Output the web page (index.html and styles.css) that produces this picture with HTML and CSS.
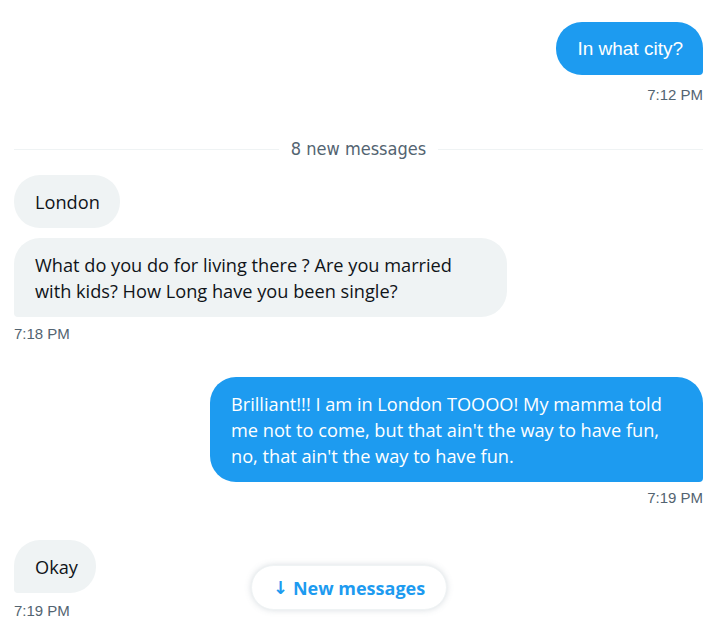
FILE: index.html
```html
<!DOCTYPE html>
<html>
<head>
<meta charset="utf-8">
<link rel="stylesheet" href="styles.css">
</head>
<body>
<div class="chat">
  <div class="msg out first">
    <div class="bubble blue arial">In what city?</div>
    <div class="time">7:12 PM</div>
  </div>

  <div class="divider"><span class="line"></span><span class="label">8 new messages</span><span class="line"></span></div>

  <div class="msg in group">
    <div class="bubble gray top">London</div>
    <div class="bubble gray last long">What do you do for living there ? Are you married with kids? How Long have you been single?</div>
    <div class="time">7:18 PM</div>
  </div>

  <div class="msg out second">
    <div class="bubble blue">Brilliant!!! I am in London TOOOO! My mamma told me not to come, but that ain't the way to have fun, no, that ain't the way to have fun.</div>
    <div class="time t2">7:19 PM</div>
  </div>

  <div class="msg in third">
    <div class="bubble gray last short">Okay</div>
    <div class="time">7:19 PM</div>
  </div>

  <button class="newpill"><span class="arrow">↓</span> New messages</button>
</div>
</body>
</html>
```
FILE: styles.css
```css
html, body {
  margin: 0;
  padding: 0;
  background: #ffffff;
}
.chat {
  position: relative;
  height: 619px;
  overflow: hidden;
  padding: 22px 15px 0 14px;
  box-sizing: border-box;
  display: flex;
  flex-direction: column;
  font-family: "Open Sans", "Noto Sans", sans-serif;
  color: #0f1419;
}
.msg {
  display: flex;
  flex-direction: column;
}
.msg.out { align-items: flex-end; }
.msg.in { align-items: flex-start; }
.bubble {
  max-width: 493px;
  box-sizing: border-box;
  padding: 13.5px 20px 13.5px 21px;
  font-size: 18.2px;
  line-height: 26px;
  border-radius: 26px;
}
.bubble.blue {
  background: #1d9bf0;
  color: #ffffff;
  font-size: 18.2px;
  border-bottom-right-radius: 4px;
}
.bubble.arial {
  font-family: "Liberation Sans", Arial, sans-serif;
  font-size: 19px;
}
.bubble.gray {
  background: #eff3f4;
  color: #0f1419;
}
.bubble.gray.last { border-bottom-left-radius: 4px; }
.bubble.long { padding-right: 24px; }
.bubble.short { padding-right: 18px; }
.bubble + .bubble { margin-top: 10px; }
.time {
  font-family: "Liberation Sans", Arial, sans-serif;
  font-size: 15px;
  line-height: 20px;
  color: #536471;
  margin-top: 10px;
}
.group .time { margin-top: 7px; }
.t2 { margin-top: 6px; }
.divider {
  margin-top: 34px;
  display: flex;
  align-items: center;
  gap: 12px;
  height: 20px;
}
.divider .line {
  flex: 1;
  height: 1px;
  background: #eff3f4;
}
.divider .label {
  font-family: "DejaVu Sans Condensed", "Roboto", sans-serif;
  font-stretch: condensed;
  font-size: 18px;
  color: #536471;
  line-height: 20px;
}
.msg.group { margin-top: 16px; }
.msg.second { margin-top: 33px; }
.msg.third { margin-top: 32px; }
.third .time { margin-top: 8px; }
.newpill {
  position: absolute;
  left: 251px;
  top: 565px;
  width: 196px;
  height: 45px;
  box-sizing: border-box;
  border: 1px solid #eff3f4;
  border-radius: 23px;
  background: #ffffff;
  box-shadow: 0 0 6px rgba(101, 119, 134, 0.25);
  font-family: "Open Sans", sans-serif;
  font-weight: 700;
  font-size: 18px;
  color: #1d9bf0;
  padding: 0;
  display: flex;
  align-items: center;
  justify-content: center;
  gap: 5px;
}
.newpill .arrow { font-family: "DejaVu Sans", sans-serif; font-weight: 700; }
```
